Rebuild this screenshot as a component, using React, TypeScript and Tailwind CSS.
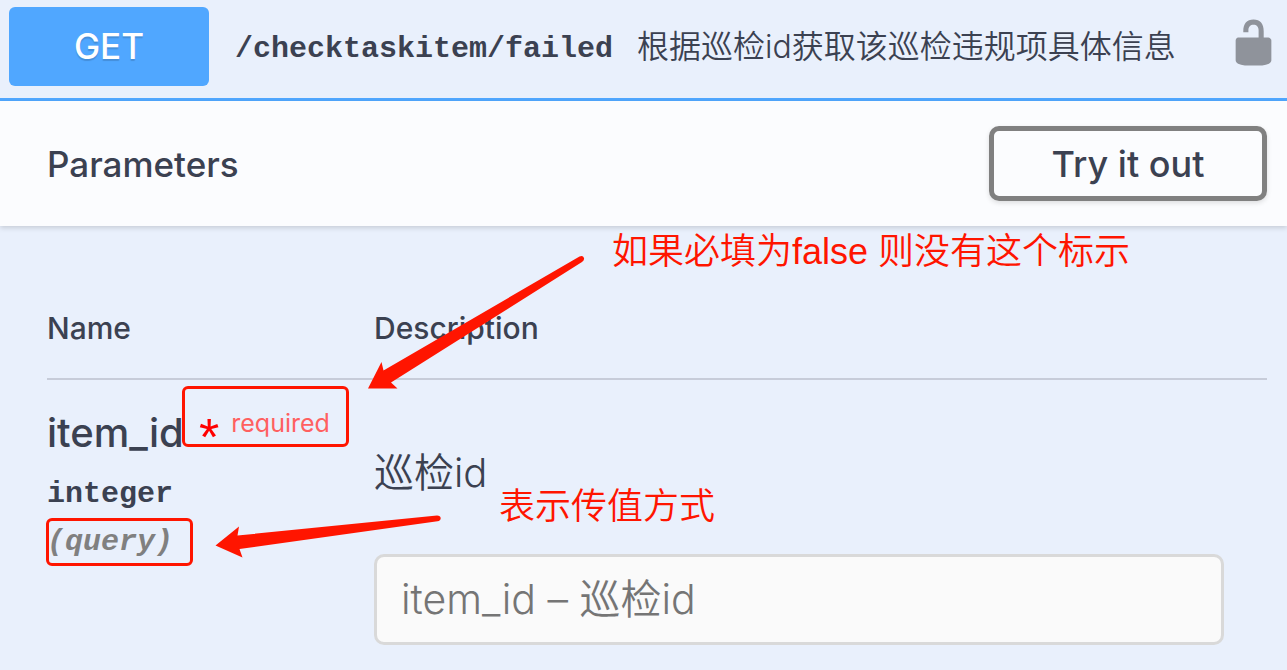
type Parameter = {
  name: string;
  required: boolean;
  type: string;
  location: string;
  description: string;
};

const parameters: Parameter[] = [
  {
    name: "item_id",
    required: true,
    type: "integer",
    location: "query",
    description: "巡检id",
  },
];

function UnlockedIcon() {
  return (
    <svg viewBox="0 0 20 20" className="size-[51px] fill-[#8f939b]" aria-hidden="true">
      <path d="M15.8 8H14V5.6C14 2.703 12.665 1 10 1 7.334 1 6 2.703 6 5.6V6h2v-.801C8 3.754 8.797 3 10 3c1.203 0 2 .754 2 2.199V8H4c-.553 0-1 .646-1 1.199V17c0 .549.428 1.139.951 1.307l1.197.387C5.672 18.861 6.55 19 7.1 19h5.8c.549 0 1.428-.139 1.951-.307l1.196-.387c.524-.167.953-.757.953-1.306V9.199C17 8.646 16.352 8 15.8 8z" />
    </svg>
  );
}

function OperationSummary() {
  return (
    <header className="flex items-center border-b-[3px] border-[#50a7ff] pt-[7px] pr-2 pb-3 pl-[9px]">
      <button className="h-[79px] w-[200px] shrink-0 rounded-md bg-[#50a7ff] text-[35px] font-medium text-white [text-shadow:0_2px_1px_rgba(0,0,0,0.15)]">
        GET
      </button>
      <a
        href="#failed"
        className="ml-[26px] pt-1 font-['Liberation_Mono',monospace] text-[30px] leading-10 font-bold whitespace-nowrap"
      >
        /checktaskitem/failed
      </a>
      <p className="ml-6 flex-1 text-[32px] leading-10 font-[350] whitespace-nowrap">
        根据巡检id获取该巡检违规项具体信息
      </p>
      <button aria-label="Authorize" className="shrink-0 pb-2">
        <UnlockedIcon />
      </button>
    </header>
  );
}

function SectionHeader() {
  return (
    <div className="flex items-center justify-between bg-[#fbfcfe] py-[25px] pr-5 pl-[47px] shadow-[0_2px_5px_rgba(0,0,0,0.15)]">
      <h4 className="text-[35px] leading-10 font-medium">Parameters</h4>
      <button className="h-[75px] w-[278px] rounded-[10px] border-[5px] border-[#808080] text-[36px] font-medium shadow-[0_2px_5px_rgba(0,0,0,0.12)]">
        Try it out
      </button>
    </div>
  );
}

function ParameterRow({ parameter }: { parameter: Parameter }) {
  const inputId = `param-${parameter.name}`;
  return (
    <tr className="align-top">
      <td className="pt-7">
        <label htmlFor={inputId} className="relative block text-[40px] leading-[50px] font-medium">
          {parameter.name}
          {parameter.required && (
            <span className="absolute -top-[22px] left-[135px] flex h-[61px] w-[167px] items-center rounded-md border-[3px] border-[#ff1500] pt-3 pl-[14px] text-[#ff0000]">
              <span className="pt-7 font-['Liberation_Sans',sans-serif] text-[52px] leading-8 font-normal">
                *
              </span>
              <span className="ml-3 text-[25px] leading-8 font-normal text-[#ff6060]">
                required
              </span>
            </span>
          )}
        </label>
        <div className="pt-4 font-['Liberation_Mono',monospace] text-[30px] leading-10 font-bold">
          {parameter.type}
        </div>
        <div className="relative mt-2 font-['Liberation_Mono',monospace] text-[30px] leading-10 font-bold text-[#808080] italic">
          ({parameter.location})
          <span className="absolute -top-1 -left-px h-12 w-[147px] rounded-md border-[3px] border-[#ff1500]" />
        </div>
      </td>
      <td className="pt-[68px] pr-[43px] text-[40px] leading-[50px] font-[350]">
        <p>{parameter.description}</p>
        <input
          id={inputId}
          type="text"
          placeholder={`${parameter.name} – ${parameter.description}`}
          className="mt-14 block h-[91px] w-full rounded-[10px] border-[3px] border-[#d9d9d9] bg-[#fafafa] px-6 pb-0.5 text-[41px] placeholder:text-[#757575] placeholder:opacity-100"
        />
      </td>
    </tr>
  );
}

function Annotations() {
  return (
    <>
      <svg
        className="pointer-events-none absolute top-0 left-0 h-[670px] w-[1287px] fill-[#ff1500]"
        viewBox="0 0 1287 670"
        aria-hidden="true"
      >
        <path d="M368 388.500L381.500 362L383.500 370.500L579.500 256.500Q583 255 584 258Q584.500 260.500 582 262L391 382.500L397.500 388.500Z" />
        <path d="M215.500 545.500L239 526.500L237.500 535.500L437 515.500Q440.500 515.500 440.700 518.300Q440.500 521 437.500 521.300L239.500 549L242.500 557.500Z" />
      </svg>
      <p className="absolute top-[227px] left-[612px] font-['Liberation_Sans','Noto_Sans_CJK_SC',sans-serif] text-[36px] leading-[50px] font-[350] whitespace-nowrap text-[#ff1500]">
        如果必填为false 则没有这个标示
      </p>
      <p className="absolute top-[482px] left-[499px] font-['Liberation_Sans','Noto_Sans_CJK_SC',sans-serif] text-[36px] leading-[50px] font-[350] whitespace-nowrap text-[#ff1500]">
        表示传值方式
      </p>
    </>
  );
}

export default function App() {
  return (
    <main className="relative min-h-screen overflow-hidden bg-[#e9f0fc] font-['Inter','Noto_Sans_CJK_SC',sans-serif] text-[#3b4151]">
      <OperationSummary />
      <SectionHeader />
      <section className="pt-[77px] pr-5 pl-[47px]">
        <table className="w-full table-fixed border-collapse text-left">
          <thead>
            <tr className="border-b-2 border-[#c7ccd9] text-[30px] leading-[50px]">
              <th className="w-[327px] pb-[25px] font-medium">Name</th>
              <th className="pb-[25px] font-medium">Description</th>
            </tr>
          </thead>
          <tbody>
            {parameters.map((parameter) => (
              <ParameterRow key={parameter.name} parameter={parameter} />
            ))}
          </tbody>
        </table>
      </section>
      <Annotations />
    </main>
  );
}
